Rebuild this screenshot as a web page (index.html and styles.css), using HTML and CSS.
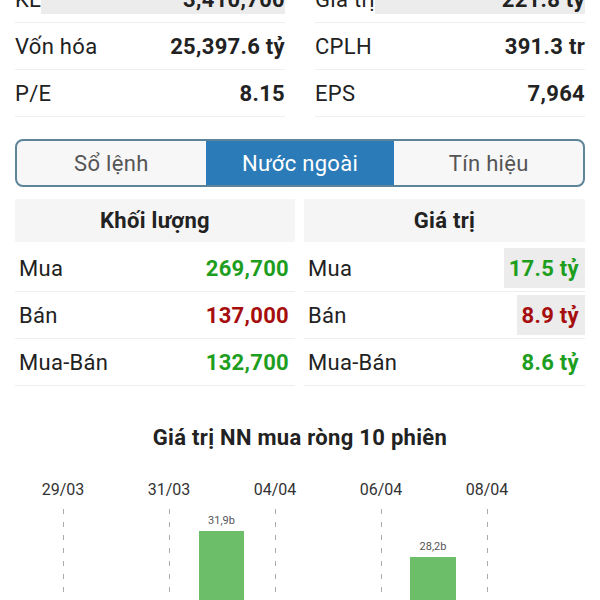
FILE: index.html
```html
<!doctype html>
<html lang="vi">
<head>
    <meta charset="UTF-8">
    <meta name="viewport" content="width=device-width, initial-scale=1.0">
    <title>Nước ngoài</title>
    <link rel="stylesheet" href="styles.css">
</head>
<body>

<div class="page">

    <div class="stats">
        <div class="stat-row hl">
            <span class="label">KL</span>
            <span class="val">3,410,700</span>
        </div>
        <div class="stat-row hl">
            <span class="label">Giá trị</span>
            <span class="val">221.8 tỷ</span>
        </div>
        <div class="stat-row">
            <span class="label">Vốn hóa</span>
            <span class="val">25,397.6 tỷ</span>
        </div>
        <div class="stat-row">
            <span class="label">CPLH</span>
            <span class="val">391.3 tr</span>
        </div>
        <div class="stat-row">
            <span class="label">P/E</span>
            <span class="val">8.15</span>
        </div>
        <div class="stat-row">
            <span class="label">EPS</span>
            <span class="val">7,964</span>
        </div>
    </div>

    <div class="tabs">
        <div class="tab">Sổ lệnh</div>
        <div class="tab active">Nước ngoài</div>
        <div class="tab">Tín hiệu</div>
    </div>

    <div class="foreign">
        <div class="ftable">
            <div class="fhead">Khối lượng</div>
            <div class="frow">
                <span class="label">Mua</span>
                <span class="num up">269,700</span>
            </div>
            <div class="frow">
                <span class="label">Bán</span>
                <span class="num down">137,000</span>
            </div>
            <div class="frow">
                <span class="label">Mua-Bán</span>
                <span class="num up">132,700</span>
            </div>
        </div>
        <div class="ftable">
            <div class="fhead">Giá trị</div>
            <div class="frow">
                <span class="label">Mua</span>
                <span class="num up hl">17.5 tỷ</span>
            </div>
            <div class="frow">
                <span class="label">Bán</span>
                <span class="num down hl">8.9 tỷ</span>
            </div>
            <div class="frow">
                <span class="label">Mua-Bán</span>
                <span class="num up">8.6 tỷ</span>
            </div>
        </div>
    </div>

    <div class="chart">
        <h3 class="chart-title">Giá trị NN mua ròng 10 phiên</h3>
        <svg class="chart-svg" width="600" height="150" viewBox="0 0 600 150">
            <g class="dates">
                <text x="63" y="37">29/03</text>
                <text x="169" y="37">31/03</text>
                <text x="275" y="37">04/04</text>
                <text x="381" y="37">06/04</text>
                <text x="487" y="37">08/04</text>
            </g>
            <g class="grid">
                <line x1="63.5" y1="51" x2="63.5" y2="150"/>
                <line x1="169.5" y1="51" x2="169.5" y2="150"/>
                <line x1="275.5" y1="51" x2="275.5" y2="150"/>
                <line x1="381.5" y1="51" x2="381.5" y2="150"/>
                <line x1="487.5" y1="51" x2="487.5" y2="150"/>
            </g>
            <g class="bars">
                <rect x="199" y="73" width="45" height="80"/>
                <rect x="410" y="99" width="46" height="60"/>
            </g>
            <g class="bar-labels">
                <text x="221.5" y="66">31,9b</text>
                <text x="433" y="92">28,2b</text>
            </g>
        </svg>
    </div>

</div>

</body>
</html>
```

FILE: styles.css
```css
html, body {
    margin: 0;
    padding: 0;
    background: #fff;
    overflow: hidden;
}

body {
    font-family: Roboto, "Noto Sans", sans-serif;
    color: #222;
}

.page {
    margin-top: -24px;
}

/* thong tin co phieu */
.stats {
    display: grid;
    grid-template-columns: 1fr 1fr;
    column-gap: 30px;
    padding: 0 15px;
}

.stat-row {
    display: flex;
    align-items: center;
    justify-content: space-between;
    height: 46px;
    border-bottom: 1px solid #eee;
    font-size: 22px;
    letter-spacing: 0.3px;
}

.stat-row .val {
    font-weight: bold;
}

.stat-row.hl .val {
    flex: 1;
    align-self: stretch;
    margin: 8px 0 8px 0;
    background: #ececec;
    display: flex;
    align-items: center;
    justify-content: flex-end;
}

/* tabs */
.tabs {
    display: flex;
    margin: 22px 15px 0;
    height: 44px;
    border: 2px solid #5d8499;
    border-radius: 8px;
    overflow: hidden;
    background: #f7f7f8;
}

.tab {
    flex: 1;
    display: flex;
    align-items: center;
    justify-content: center;
    font-size: 22px;
    letter-spacing: 0.3px;
    color: #555;
}

.tab.active {
    background: #2b7bb9;
    color: #fff;
}

/* nuoc ngoai */
.foreign {
    display: grid;
    grid-template-columns: 280px 1fr;
    column-gap: 9px;
    padding: 0 15px;
    margin-top: 12px;
}

.fhead {
    height: 43px;
    margin-bottom: 3px;
    background: #f5f5f5;
    display: flex;
    align-items: center;
    justify-content: center;
    font-size: 22px;
    letter-spacing: 0.3px;
    font-weight: bold;
}

.frow {
    display: flex;
    align-items: center;
    justify-content: space-between;
    height: 46px;
    padding-left: 4px;
    border-bottom: 1px solid #eee;
    font-size: 22px;
    letter-spacing: 0.3px;
}

.num {
    font-weight: bold;
    height: 40px;
    padding: 0 6px 0 5px;
    display: flex;
    align-items: center;
}

.num.hl {
    background: #ececec;
}

.up {
    color: #1e9e1e;
}

.down {
    color: #a60d0d;
}

/* bieu do */
.chart {
    margin-top: 40px;
}

.chart-title {
    margin: 0;
    text-align: center;
    font-size: 22px;
    letter-spacing: 0.3px;
    line-height: 24px;
    font-weight: bold;
    color: #222;
}

.chart-svg {
    display: block;
    margin-top: 8px;
}

.dates text {
    font-family: Roboto, sans-serif;
    font-size: 16px;
    fill: #333;
    text-anchor: middle;
}

.grid line {
    stroke: #aaa;
    stroke-width: 1;
    stroke-dasharray: 5 8;
}

.bars rect {
    fill: #6dbe69;
}

.bar-labels text {
    font-family: Roboto, sans-serif;
    font-size: 11px;
    fill: #555;
    text-anchor: middle;
}
```
